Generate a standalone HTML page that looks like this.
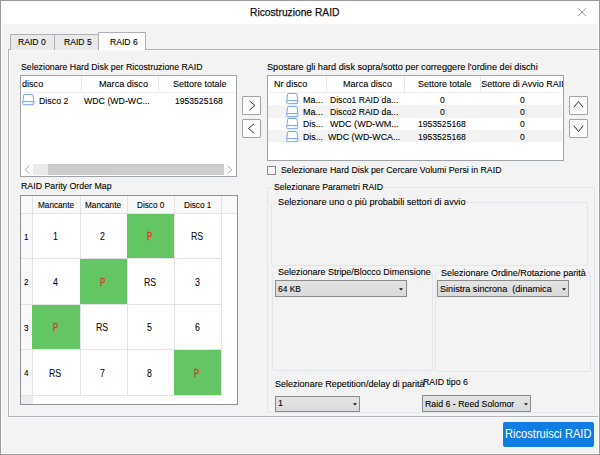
<!DOCTYPE html><html><head><meta charset="utf-8"><style>
html,body{margin:0;padding:0;}
body{width:600px;height:455px;position:relative;overflow:hidden;background:#f3f3f3;font-family:"Liberation Sans",sans-serif;color:#000;}
body div, body span, body svg{position:absolute;box-sizing:border-box;}
.t{white-space:nowrap;line-height:1;transform-origin:0 0;-webkit-text-stroke-width:0.1px;}
</style></head><body>
<div style="left:0px;top:0px;width:600px;height:24px;background:#fff;"></div>
<span class="t" style="left:250.00px;top:6.92px;font-size:11.20px;transform:scaleX(0.9158);color:#111;-webkit-text-stroke-width:0.25px;">Ricostruzione RAID</span>
<svg style="left:577px;top:7px" width="11" height="11" viewBox="0 0 11 11"><path d="M1 1.2 L9 9.2 M9 1.2 L1 9.2" stroke="#858585" stroke-width="0.9"/></svg>
<div style="left:8px;top:49px;width:612px;height:367.5px;border:1px solid #b0b4b9;background:#f3f3f3;box-shadow:-1px 1px 0 #fbfbfb, inset 1px 1px 0 #fafafa;"></div>
<div style="left:10px;top:34px;width:44.5px;height:15.5px;border:1px solid #adb1b5;border-bottom:none;background:#e9e9e9;"></div>
<div style="left:54px;top:34px;width:45px;height:15.5px;border:1px solid #adb1b5;border-bottom:none;background:#e9e9e9;"></div>
<div style="left:98px;top:32px;width:48px;height:18px;border:1px solid #adb1b5;border-bottom:none;background:#fff;"></div>
<span class="t" style="left:18.00px;top:37.12px;font-size:9.90px;transform:scaleX(0.8687);">RAID 0</span>
<span class="t" style="left:63.80px;top:37.02px;font-size:9.90px;transform:scaleX(0.8687);">RAID 5</span>
<span class="t" style="left:109.60px;top:36.82px;font-size:9.90px;transform:scaleX(0.8687);">RAID 6</span>
<span class="t" style="left:20.80px;top:62.12px;font-size:9.90px;transform:scaleX(0.8889);">Selezionare Hard Disk per Ricostruzione RAID</span>
<div style="left:20px;top:75px;width:217px;height:101.5px;border:1px solid #9ea3a8;background:#fff;"></div>
<div style="left:81px;top:76px;width:1px;height:16px;background:#e8e8e8;"></div>
<div style="left:158px;top:76px;width:1px;height:16px;background:#e8e8e8;"></div>
<div style="left:21px;top:91.5px;width:215px;height:1.0px;background:#eeeeee;"></div>
<span class="t" style="left:21.90px;top:79.22px;font-size:9.90px;transform:scaleX(0.9192);">disco</span>
<span class="t" style="left:99.20px;top:79.22px;font-size:9.90px;transform:scaleX(0.9192);">Marca disco</span>
<span class="t" style="left:173.00px;top:79.22px;font-size:9.90px;transform:scaleX(0.9091);">Settore totale</span>
<svg style="left:21.7px;top:94.2px" width="13" height="12" viewBox="0 0 13 12"><path d="M1.6 1.3 Q1.6 0.5 2.4 0.5 H10.2 Q11 0.5 11 1.3 L11.8 7.6 V10 Q11.8 10.7 11.1 10.7 H1.5 Q0.8 10.7 0.8 10 V7.6 Z" fill="#fff" stroke="#76a3ec" stroke-width="1"/><path d="M0.8 7.6 H11.8" stroke="#76a3ec" stroke-width="1"/><path d="M9.4 9.2 h1.2" stroke="#9dbdf0" stroke-width="0.8"/></svg>
<span class="t" style="left:39.00px;top:95.82px;font-size:9.90px;transform:scaleX(0.8936);">Disco 2</span>
<span class="t" style="left:84.20px;top:95.82px;font-size:9.90px;transform:scaleX(0.8889);">WDC (WD-WC...</span>
<span class="t" style="left:175.20px;top:95.82px;font-size:9.90px;transform:scaleX(0.8687);">1953525168</span>
<div style="left:21px;top:163.5px;width:215px;height:11.5px;background:#eaeaea;"></div>
<div style="left:21px;top:163.5px;width:12px;height:11.5px;background:#fff;"></div>
<div style="left:224px;top:163.5px;width:12px;height:11.5px;background:#fff;"></div>
<div style="left:48px;top:164px;width:176px;height:11px;background:#cdcdcd;"></div>
<svg style="left:23px;top:165px" width="9" height="10" viewBox="0 0 9 10"><path d="M6.5 0.7 L2.2 4.7 L6.5 8.7" fill="none" stroke="#a6a6a6" stroke-width="1"/></svg>
<svg style="left:225.3px;top:165px" width="9" height="10" viewBox="0 0 9 10"><path d="M2.5 0.7 L6.8 4.7 L2.5 8.7" fill="none" stroke="#a6a6a6" stroke-width="1"/></svg>
<div style="left:242px;top:96px;width:19px;height:18.5px;border:1px solid #a3a3a3;background:#fbfbfb;border-radius:1px;"></div>
<div style="left:242px;top:119px;width:19px;height:18.5px;border:1px solid #a3a3a3;background:#fbfbfb;border-radius:1px;"></div>
<svg style="left:248px;top:100px" width="9" height="11" viewBox="0 0 9 11"><path d="M1.5 1 L7 5.5 L1.5 10" fill="none" stroke="#333" stroke-width="1"/></svg>
<svg style="left:247px;top:123px" width="9" height="11" viewBox="0 0 9 11"><path d="M7 1 L1.5 5.5 L7 10" fill="none" stroke="#333" stroke-width="1"/></svg>
<span class="t" style="left:267.30px;top:61.62px;font-size:9.90px;transform:scaleX(0.9263);">Spostare gli hard disk sopra/sotto per correggere l'ordine dei dischi</span>
<div style="left:267px;top:75px;width:297.29999999999995px;height:86px;border:1px solid #9ea3a8;background:#fff;overflow:hidden;"></div>
<div style="left:326px;top:76px;width:1px;height:16px;background:#e8e8e8;"></div>
<div style="left:404px;top:76px;width:1px;height:16px;background:#e8e8e8;"></div>
<div style="left:480px;top:76px;width:1px;height:16px;background:#e8e8e8;"></div>
<div style="left:268.5px;top:91.8px;width:294.5px;height:1.0px;background:#eeeeee;"></div>
<span class="t" style="left:273.70px;top:78.92px;font-size:9.90px;transform:scaleX(0.9192);">Nr disco</span>
<span class="t" style="left:343.30px;top:78.92px;font-size:9.90px;transform:scaleX(0.9192);">Marca disco</span>
<span class="t" style="left:417.50px;top:78.92px;font-size:9.90px;transform:scaleX(0.9091);">Settore totale</span>
<div style="left:481.3px;top:76px;width:82px;height:16px;overflow:hidden;">
<span class="t" style="left:0px;top:3.68px;font-size:9.0px;">Settore di Avvio RAID</span></div>
<div style="left:268px;top:105.15px;width:294.29999999999995px;height:12.450000000000003px;background:#f3f3f3;"></div>
<div style="left:268px;top:130.05px;width:294.29999999999995px;height:12.449999999999989px;background:#f3f3f3;"></div>
<svg style="left:285.6px;top:93.3px" width="13" height="12" viewBox="0 0 13 12"><path d="M1.6 1.3 Q1.6 0.5 2.4 0.5 H10.2 Q11 0.5 11 1.3 L11.8 7.6 V10 Q11.8 10.7 11.1 10.7 H1.5 Q0.8 10.7 0.8 10 V7.6 Z" fill="#fff" stroke="#76a3ec" stroke-width="1"/><path d="M0.8 7.6 H11.8" stroke="#76a3ec" stroke-width="1"/><path d="M9.4 9.2 h1.2" stroke="#9dbdf0" stroke-width="0.8"/></svg>
<span class="t" style="left:302.80px;top:94.52px;font-size:9.90px;transform:scaleX(0.9089);">Ma...</span>
<span class="t" style="left:330.00px;top:94.52px;font-size:9.90px;transform:scaleX(0.8706);">Disco1 RAID da...</span>
<span class="t" style="left:439.91px;top:94.52px;font-size:9.90px;transform:scaleX(0.8687);">0</span>
<span class="t" style="left:519.51px;top:94.52px;font-size:9.90px;transform:scaleX(0.8687);">0</span>
<svg style="left:285.6px;top:105.75px" width="13" height="12" viewBox="0 0 13 12"><path d="M1.6 1.3 Q1.6 0.5 2.4 0.5 H10.2 Q11 0.5 11 1.3 L11.8 7.6 V10 Q11.8 10.7 11.1 10.7 H1.5 Q0.8 10.7 0.8 10 V7.6 Z" fill="#fff" stroke="#76a3ec" stroke-width="1"/><path d="M0.8 7.6 H11.8" stroke="#76a3ec" stroke-width="1"/><path d="M9.4 9.2 h1.2" stroke="#9dbdf0" stroke-width="0.8"/></svg>
<span class="t" style="left:302.80px;top:106.97px;font-size:9.90px;transform:scaleX(0.9089);">Ma...</span>
<span class="t" style="left:330.00px;top:106.97px;font-size:9.90px;transform:scaleX(0.8706);">Disco2 RAID da...</span>
<span class="t" style="left:439.91px;top:106.97px;font-size:9.90px;transform:scaleX(0.8687);">0</span>
<span class="t" style="left:519.51px;top:106.97px;font-size:9.90px;transform:scaleX(0.8687);">0</span>
<svg style="left:285.6px;top:118.19999999999999px" width="13" height="12" viewBox="0 0 13 12"><path d="M1.6 1.3 Q1.6 0.5 2.4 0.5 H10.2 Q11 0.5 11 1.3 L11.8 7.6 V10 Q11.8 10.7 11.1 10.7 H1.5 Q0.8 10.7 0.8 10 V7.6 Z" fill="#fff" stroke="#76a3ec" stroke-width="1"/><path d="M0.8 7.6 H11.8" stroke="#76a3ec" stroke-width="1"/><path d="M9.4 9.2 h1.2" stroke="#9dbdf0" stroke-width="0.8"/></svg>
<span class="t" style="left:302.80px;top:119.42px;font-size:9.90px;transform:scaleX(0.8869);">Dis...</span>
<span class="t" style="left:330.00px;top:119.42px;font-size:9.90px;transform:scaleX(0.9160);">WDC (WD-WM...</span>
<span class="t" style="left:418.38px;top:119.42px;font-size:9.90px;transform:scaleX(0.8687);">1953525168</span>
<span class="t" style="left:519.51px;top:119.42px;font-size:9.90px;transform:scaleX(0.8687);">0</span>
<svg style="left:285.6px;top:130.65px" width="13" height="12" viewBox="0 0 13 12"><path d="M1.6 1.3 Q1.6 0.5 2.4 0.5 H10.2 Q11 0.5 11 1.3 L11.8 7.6 V10 Q11.8 10.7 11.1 10.7 H1.5 Q0.8 10.7 0.8 10 V7.6 Z" fill="#fff" stroke="#76a3ec" stroke-width="1"/><path d="M0.8 7.6 H11.8" stroke="#76a3ec" stroke-width="1"/><path d="M9.4 9.2 h1.2" stroke="#9dbdf0" stroke-width="0.8"/></svg>
<span class="t" style="left:302.80px;top:131.87px;font-size:9.90px;transform:scaleX(0.8869);">Dis...</span>
<span class="t" style="left:328.00px;top:131.87px;font-size:9.90px;transform:scaleX(0.8969);">WDC (WD-WCA...</span>
<span class="t" style="left:418.38px;top:131.87px;font-size:9.90px;transform:scaleX(0.8687);">1953525168</span>
<span class="t" style="left:519.51px;top:131.87px;font-size:9.90px;transform:scaleX(0.8687);">0</span>
<div style="left:569px;top:96px;width:19px;height:18.5px;border:1px solid #a3a3a3;background:#fbfbfb;border-radius:1px;"></div>
<div style="left:569px;top:119px;width:19px;height:18.5px;border:1px solid #a3a3a3;background:#fbfbfb;border-radius:1px;"></div>
<svg style="left:573px;top:100px" width="11" height="9" viewBox="0 0 11 9"><path d="M0.9 7.3 L5.5 1.6 L10.1 7.3" fill="none" stroke="#333" stroke-width="1"/></svg>
<svg style="left:573px;top:124px" width="11" height="9" viewBox="0 0 11 9"><path d="M0.9 1.7 L5.5 7.6 L10.1 1.7" fill="none" stroke="#333" stroke-width="1"/></svg>
<div style="left:267px;top:166px;width:8.5px;height:9px;border:1px solid #8a8a8a;background:#f5f5f5;"></div>
<span class="t" style="left:280.70px;top:165.12px;font-size:9.90px;transform:scaleX(0.8909);">Selezionare Hard Disk per Cercare Volumi Persi in RAID</span>
<div style="left:267px;top:186.5px;width:328px;height:226.5px;border:1px solid #e0e6eb;border-radius:2px;"></div>
<div style="left:272px;top:180px;width:113px;height:12px;background:#f3f3f3;"></div>
<span class="t" style="left:274.00px;top:182.12px;font-size:9.90px;transform:scaleX(0.8788);">Selezionare Parametri RAID</span>
<div style="left:271.3px;top:201.5px;width:316.7px;height:64.0px;border:1px solid #e0e6eb;border-radius:2px;"></div>
<div style="left:276px;top:195px;width:191px;height:12px;background:#f3f3f3;"></div>
<span class="t" style="left:277.80px;top:197.02px;font-size:9.90px;transform:scaleX(0.9308);">Selezionare uno o più probabili settori di avvio</span>
<div style="left:271.5px;top:271.5px;width:161.5px;height:99.5px;border:1px solid #e0e6eb;border-radius:2px;"></div>
<div style="left:276px;top:265.5px;width:156px;height:11.5px;background:#f3f3f3;"></div>
<span class="t" style="left:278.00px;top:267.32px;font-size:9.90px;transform:scaleX(0.9091);">Selezionare Stripe/Blocco Dimensione</span>
<div style="left:435px;top:271.5px;width:155.5px;height:100.0px;border:1px solid #e0e6eb;border-radius:2px;"></div>
<div style="left:439px;top:265.5px;width:149px;height:11.5px;background:#f3f3f3;"></div>
<span class="t" style="left:441.30px;top:267.82px;font-size:9.90px;transform:scaleX(0.9091);">Selezionare Ordine/Rotazione parità</span>
<div style="left:275px;top:280px;width:131.5px;height:17px;border:1px solid #8a8a8a;background:linear-gradient(#e4e4e4,#dadada);"></div>
<span class="t" style="left:278.00px;top:283.92px;font-size:9.90px;transform:scaleX(0.8528);">64 KB</span>
<svg style="left:399.3px;top:287.5px" width="4" height="3" viewBox="0 0 4 3"><path d="M0 0.3 H4 L2 2.6 Z" fill="#111"/></svg>
<div style="left:437.3px;top:280.3px;width:131.40000000000003px;height:16.69999999999999px;border:1px solid #8a8a8a;background:linear-gradient(#e4e4e4,#dadada);"></div>
<span class="t" style="left:440.30px;top:283.92px;font-size:9.90px;transform:scaleX(0.9210);">Sinistra sincrona&nbsp; (dinamica</span>
<svg style="left:561.5px;top:287.6px" width="4" height="3" viewBox="0 0 4 3"><path d="M0 0.3 H4 L2 2.6 Z" fill="#111"/></svg>
<span class="t" style="left:275.00px;top:378.52px;font-size:9.90px;transform:scaleX(0.9146);">Selezionare Repetition/delay di parità</span>
<span class="t" style="left:423.00px;top:377.22px;font-size:9.90px;transform:scaleX(0.8889);">RAID tipo 6</span>
<div style="left:275px;top:395.5px;width:85.30000000000001px;height:16.0px;border:1px solid #8a8a8a;background:linear-gradient(#e4e4e4,#dadada);"></div>
<span class="t" style="left:278.00px;top:398.42px;font-size:9.90px;transform:scaleX(0.9091);">1</span>
<svg style="left:353.1px;top:402.5px" width="4" height="3" viewBox="0 0 4 3"><path d="M0 0.3 H4 L2 2.6 Z" fill="#111"/></svg>
<div style="left:422px;top:395.3px;width:109px;height:16.69999999999999px;border:1px solid #8a8a8a;background:linear-gradient(#e4e4e4,#dadada);"></div>
<span class="t" style="left:425.00px;top:398.92px;font-size:9.90px;transform:scaleX(0.8889);">Raid 6 - Reed Solomor</span>
<svg style="left:523.8px;top:402.6px" width="4" height="3" viewBox="0 0 4 3"><path d="M0 0.3 H4 L2 2.6 Z" fill="#111"/></svg>
<span class="t" style="left:20.50px;top:181.42px;font-size:9.90px;transform:scaleX(0.8919);">RAID Parity Order Map</span>
<div style="left:20px;top:195px;width:217.5px;height:209.5px;border:1px solid #8e9297;background:#fff;"></div>
<div style="left:21px;top:196px;width:215.5px;height:17px;background:#f9f9f9;"></div>
<div style="left:21px;top:213px;width:11.5px;height:190.5px;background:#f9f9f9;"></div>
<div style="left:21px;top:395.5px;width:11.5px;height:8.0px;background:#ececec;"></div>
<div style="left:32.0px;top:196px;width:1.0px;height:199.5px;background:#e3e3e3;"></div>
<div style="left:79.5px;top:196px;width:1.0px;height:199.5px;background:#e3e3e3;"></div>
<div style="left:126.5px;top:196px;width:1.0px;height:199.5px;background:#e3e3e3;"></div>
<div style="left:174.0px;top:196px;width:1.0px;height:199.5px;background:#e3e3e3;"></div>
<div style="left:221.0px;top:196px;width:1.0px;height:199.5px;background:#e3e3e3;"></div>
<div style="left:21px;top:212.5px;width:215.5px;height:1.0px;background:#e3e3e3;"></div>
<div style="left:21px;top:258.0px;width:200.5px;height:1.0px;background:#e3e3e3;"></div>
<div style="left:21px;top:303.5px;width:200.5px;height:1.0px;background:#e3e3e3;"></div>
<div style="left:21px;top:349.0px;width:200.5px;height:1.0px;background:#e3e3e3;"></div>
<div style="left:21px;top:394.5px;width:200.5px;height:1.0px;background:#e3e3e3;"></div>
<div style="left:126.5px;top:213.5px;width:47.5px;height:44.5px;background:#64c564;"></div>
<div style="left:79.5px;top:259.0px;width:47.0px;height:44.5px;background:#64c564;"></div>
<div style="left:32.0px;top:304.5px;width:47.5px;height:44.5px;background:#64c564;"></div>
<div style="left:174.0px;top:350.0px;width:47.0px;height:44.5px;background:#64c564;"></div>
<span class="t" style="left:37.74px;top:200.88px;font-size:9.00px;transform:scaleX(0.9111);">Mancante</span>
<span class="t" style="left:84.99px;top:200.88px;font-size:9.00px;transform:scaleX(0.9111);">Mancante</span>
<span class="t" style="left:136.58px;top:200.88px;font-size:9.00px;transform:scaleX(0.9111);">Disco 0</span>
<span class="t" style="left:183.83px;top:200.88px;font-size:9.00px;transform:scaleX(0.9111);">Disco 1</span>
<span class="t" style="left:23.80px;top:232.88px;font-size:9.30px;transform:scaleX(0.8817);">1</span>
<span class="t" style="left:52.80px;top:232.15px;font-size:10.40px;transform:scaleX(0.8462);-webkit-text-stroke-width:0.05px;">1</span>
<span class="t" style="left:100.05px;top:232.15px;font-size:10.40px;transform:scaleX(0.8462);-webkit-text-stroke-width:0.05px;">2</span>
<span class="t" style="left:147.15px;top:232.35px;font-size:10.40px;transform:scaleX(0.7496);color:#e2321c;-webkit-text-stroke-width:0.35px;">P</span>
<span class="t" style="left:190.89px;top:232.15px;font-size:10.40px;transform:scaleX(0.8462);-webkit-text-stroke-width:0.05px;">RS</span>
<span class="t" style="left:23.80px;top:278.38px;font-size:9.30px;transform:scaleX(0.8817);">2</span>
<span class="t" style="left:52.80px;top:277.65px;font-size:10.40px;transform:scaleX(0.8462);-webkit-text-stroke-width:0.05px;">4</span>
<span class="t" style="left:99.90px;top:277.85px;font-size:10.40px;transform:scaleX(0.7496);color:#e2321c;-webkit-text-stroke-width:0.35px;">P</span>
<span class="t" style="left:143.64px;top:277.65px;font-size:10.40px;transform:scaleX(0.8462);-webkit-text-stroke-width:0.05px;">RS</span>
<span class="t" style="left:194.55px;top:277.65px;font-size:10.40px;transform:scaleX(0.8462);-webkit-text-stroke-width:0.05px;">3</span>
<span class="t" style="left:23.80px;top:323.88px;font-size:9.30px;transform:scaleX(0.8817);">3</span>
<span class="t" style="left:52.65px;top:323.35px;font-size:10.40px;transform:scaleX(0.7496);color:#e2321c;-webkit-text-stroke-width:0.35px;">P</span>
<span class="t" style="left:96.39px;top:323.15px;font-size:10.40px;transform:scaleX(0.8462);-webkit-text-stroke-width:0.05px;">RS</span>
<span class="t" style="left:147.30px;top:323.15px;font-size:10.40px;transform:scaleX(0.8462);-webkit-text-stroke-width:0.05px;">5</span>
<span class="t" style="left:194.55px;top:323.15px;font-size:10.40px;transform:scaleX(0.8462);-webkit-text-stroke-width:0.05px;">6</span>
<span class="t" style="left:23.80px;top:369.38px;font-size:9.30px;transform:scaleX(0.8817);">4</span>
<span class="t" style="left:49.14px;top:368.65px;font-size:10.40px;transform:scaleX(0.8462);-webkit-text-stroke-width:0.05px;">RS</span>
<span class="t" style="left:100.05px;top:368.65px;font-size:10.40px;transform:scaleX(0.8462);-webkit-text-stroke-width:0.05px;">7</span>
<span class="t" style="left:147.30px;top:368.65px;font-size:10.40px;transform:scaleX(0.8462);-webkit-text-stroke-width:0.05px;">8</span>
<span class="t" style="left:194.40px;top:368.85px;font-size:10.40px;transform:scaleX(0.7496);color:#e2321c;-webkit-text-stroke-width:0.35px;">P</span>
<div style="left:503px;top:422px;width:91px;height:24.5px;background:#0f7de2;border-radius:2px;"></div>
<span class="t" style="left:505.20px;top:428.24px;font-size:12.00px;transform:scaleX(0.9266);color:#fff;-webkit-text-stroke-width:0;">Ricostruisci RAID</span>
<div style="left:0px;top:0px;width:600px;height:455px;border:1px solid #9a9a9a;box-shadow:inset 0 0 0 1px rgba(255,255,255,0.8);"></div>
</body></html>
